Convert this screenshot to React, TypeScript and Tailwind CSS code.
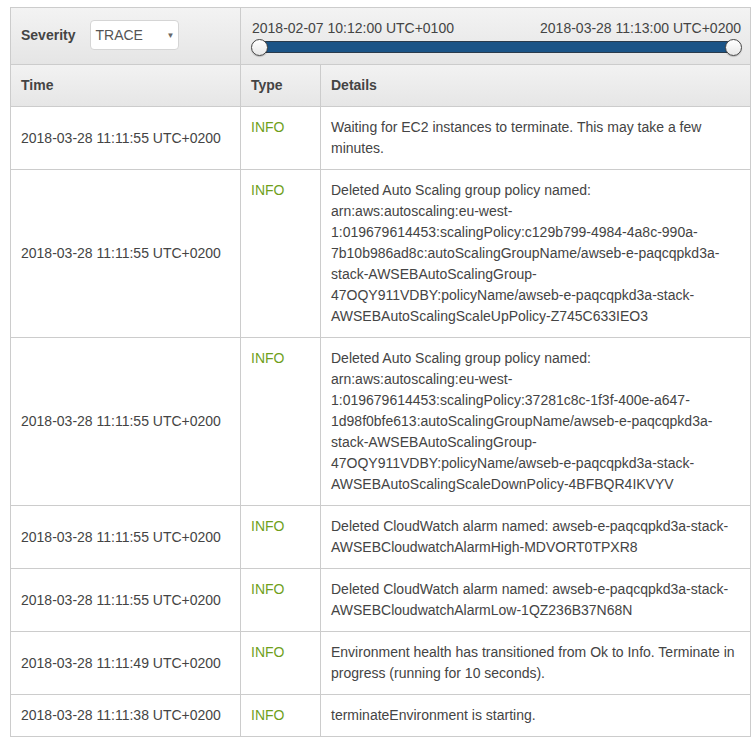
import React from 'react';

type EventRow = {
	time: string;
	type: string;
	details: string;
};

const events: EventRow[] = [
	{
		time: '2018-03-28 11:11:55 UTC+0200',
		type: 'INFO',
		details: 'Waiting for EC2 instances to terminate. This may take a few minutes.'
	},
	{
		time: '2018-03-28 11:11:55 UTC+0200',
		type: 'INFO',
		details:
			'Deleted Auto Scaling group policy named: arn:aws:autoscaling:eu-west-1:019679614453:scalingPolicy:c129b799-4984-4a8c-990a-7b10b986ad8c:autoScalingGroupName/awseb-e-paqcqpkd3a-stack-AWSEBAutoScalingGroup-47OQY911VDBY:policyName/awseb-e-paqcqpkd3a-stack-AWSEBAutoScalingScaleUpPolicy-Z745C633IEO3'
	},
	{
		time: '2018-03-28 11:11:55 UTC+0200',
		type: 'INFO',
		details:
			'Deleted Auto Scaling group policy named: arn:aws:autoscaling:eu-west-1:019679614453:scalingPolicy:37281c8c-1f3f-400e-a647-1d98f0bfe613:autoScalingGroupName/awseb-e-paqcqpkd3a-stack-AWSEBAutoScalingGroup-47OQY911VDBY:policyName/awseb-e-paqcqpkd3a-stack-AWSEBAutoScalingScaleDownPolicy-4BFBQR4IKVYV'
	},
	{
		time: '2018-03-28 11:11:55 UTC+0200',
		type: 'INFO',
		details: 'Deleted CloudWatch alarm named: awseb-e-paqcqpkd3a-stack-AWSEBCloudwatchAlarmHigh-MDVORT0TPXR8'
	},
	{
		time: '2018-03-28 11:11:55 UTC+0200',
		type: 'INFO',
		details: 'Deleted CloudWatch alarm named: awseb-e-paqcqpkd3a-stack-AWSEBCloudwatchAlarmLow-1QZ236B37N68N'
	},
	{
		time: '2018-03-28 11:11:49 UTC+0200',
		type: 'INFO',
		details: 'Environment health has transitioned from Ok to Info. Terminate in progress (running for 10 seconds).'
	},
	{
		time: '2018-03-28 11:11:38 UTC+0200',
		type: 'INFO',
		details: 'terminateEnvironment is starting.'
	}
];

const Thumb = () => (
	<div className="w-[17px] h-[17px] rounded-full bg-linear-to-b from-white to-[#e8e8e8] border border-[#444] shadow-[0_1px_1px_rgba(0,0,0,0.2)]" />
);

export default function App() {
	return (
		<div
			className="pt-[7px] pl-[10px] bg-white min-h-[738px] text-[#444] text-[14px] leading-[21px]"
			style={{ fontFamily: '"Liberation Sans", Arial, sans-serif' }}
		>
			<table className="w-[741px] border-collapse table-fixed">
				<colgroup>
					<col className="w-[230px]" />
					<col className="w-[80px]" />
					<col />
				</colgroup>
				<thead>
					<tr className="h-[57px] bg-linear-to-b from-[#f3f3f3] to-[#e5e5e5]">
						<th className="border border-[#ccc] px-[10px] pt-0 pb-[2px] text-left align-middle">
							<div className="flex items-center gap-[15px]">
								<span className="font-bold">Severity</span>
								<div className="w-[89px] h-[30px] bg-white border border-[#d5d5d5] rounded-[4px] flex items-center justify-between pl-[4px] pr-[4px] font-normal text-[#555] text-[14px]">
									<span>TRACE</span>
									<span className="text-[8px] text-[#666]">▼</span>
								</div>
							</div>
						</th>
						<th colSpan={2} className="border border-[#ccc] pl-[11px] pr-[9px] pt-[12px] pb-[6px] text-left align-top font-normal">
							<div className="flex justify-between leading-[17px]">
								<span>2018-02-07 10:12:00 UTC+0100</span>
								<span>2018-03-28 11:13:00 UTC+0200</span>
							</div>
							<div className="relative h-[17px] mt-[2px]">
								<div className="absolute left-[4px] right-[4px] top-[2px] h-[12px] bg-[#1b5487] border border-[#2a3b4c] rounded-[2px]" />
								<div className="absolute left-[-1px] top-0">
									<Thumb />
								</div>
								<div className="absolute right-[-1px] top-0">
									<Thumb />
								</div>
							</div>
						</th>
					</tr>
					<tr className="bg-linear-to-b from-[#f2f2f2] to-[#e6e6e6]">
						<th className="border border-[#ccc] p-[10px] text-left font-bold">Time</th>
						<th className="border border-[#ccc] p-[10px] text-left font-bold">Type</th>
						<th className="border border-[#ccc] p-[10px] text-left font-bold">Details</th>
					</tr>
				</thead>
				<tbody>
					{events.map((e, i) => (
						<tr key={i}>
							<td className="border border-[#ccc] p-[10px] align-middle whitespace-nowrap">{e.time}</td>
							<td className="border border-[#ccc] p-[10px] align-top text-[#6f9f1c]">{e.type}</td>
							<td className="border border-[#ccc] p-[10px] align-top break-words">{e.details}</td>
						</tr>
					))}
				</tbody>
			</table>
		</div>
	);
}
